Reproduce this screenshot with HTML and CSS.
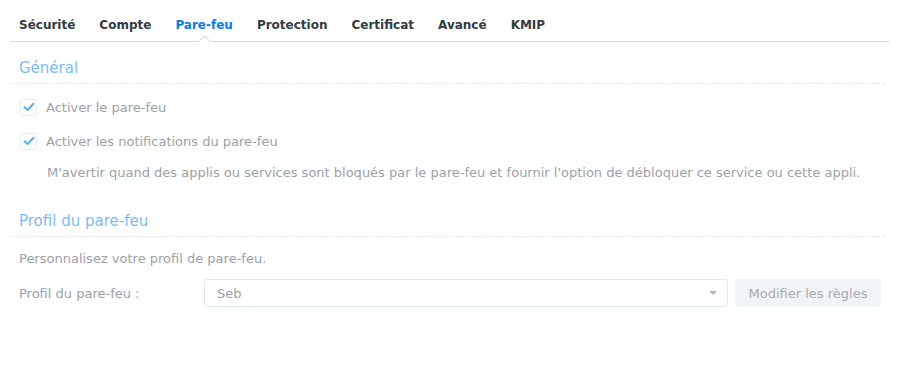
FILE: index.html
```html
<!DOCTYPE html>
<html lang="fr">
  <head>
    <meta charset="UTF-8" />
    <title>Pare-feu</title>
    <link rel="stylesheet" href="styles.css">
  </head>
  <body>
    <!-- tabs -->
    <div class="tabs">
      <span class="tab">Sécurité</span>
      <span class="tab">Compte</span>
      <span class="tab active">Pare-feu</span>
      <span class="tab">Protection</span>
      <span class="tab">Certificat</span>
      <span class="tab">Avancé</span>
      <span class="tab">KMIP</span>
    </div>

    <div class="content">
      <!-- general -->
      <div class="section">
        <h2 class="section-title">Général</h2>
        <label class="check-row">
          <span class="check"><svg width="12" height="10" viewBox="0 0 12 10"><path d="M1.5 5.2 L4.6 8 L10.5 1.8" fill="none" stroke="#5aaaf0" stroke-width="2" stroke-linecap="round" stroke-linejoin="round"/></svg></span>
          Activer le pare-feu
        </label>
        <label class="check-row">
          <span class="check"><svg width="12" height="10" viewBox="0 0 12 10"><path d="M1.5 5.2 L4.6 8 L10.5 1.8" fill="none" stroke="#5aaaf0" stroke-width="2" stroke-linecap="round" stroke-linejoin="round"/></svg></span>
          Activer les notifications du pare-feu
        </label>
        <p class="hint">M'avertir quand des applis ou services sont bloqués par le pare-feu et fournir l'option de débloquer ce service ou cette appli.</p>
      </div>

      <!-- profile -->
      <div class="section">
        <h2 class="section-title">Profil du pare-feu</h2>
        <p class="desc">Personnalisez votre profil de pare-feu.</p>
        <div class="form-row">
          <span class="form-label">Profil du pare-feu :</span>
          <div class="select">
            <span>Seb</span>
            <span class="arrow"></span>
          </div>
          <button class="btn">Modifier les règles</button>
        </div>
      </div>
    </div>
  </body>
</html>
```

FILE: styles.css
```css
* {
  margin: 0;
  padding: 0;
  box-sizing: border-box;
}
body {
  width: 902px;
  height: 365px;
  background: #fff;
  font-family: "DejaVu Sans", Verdana, sans-serif;
  font-size: 13px;
  color: #9ca1a7;
}
.tabs {
  margin: 0 13px 0 10px;
  height: 42px;
  border-bottom: 1px solid #c9dbe6;
  display: flex;
  align-items: flex-end;
  padding-left: 9px;
}
.tab {
  font-weight: bold;
  font-size: 12px;
  color: #323a42;
  padding-bottom: 9px;
  margin-right: 24px;
  position: relative;
}
.tab.active {
  color: #0a7ce2;
}
.tab.active::after {
  content: "";
  position: absolute;
  left: 50%;
  bottom: -5px;
  width: 8px;
  height: 8px;
  margin-left: -4px;
  background: #fff;
  border-left: 1px solid #c9dbe6;
  border-top: 1px solid #c9dbe6;
  transform: rotate(45deg);
}
.content {
  padding: 0 14px 0 10px;
}
.section {
  padding-left: 9px;
}
.section-title {
  font-size: 15px;
  font-weight: normal;
  color: #7cbcf2;
  margin-left: -9px;
  padding-left: 9px;
  padding-top: 17px;
  padding-bottom: 6px;
  border-bottom: 1px dashed #e6e9ec;
  margin-right: 3px;
  line-height: 18px;
}
.check-row {
  display: flex;
  align-items: center;
  gap: 9px;
  height: 18px;
  margin-top: 14px;
  padding-left: 1px;
}
.check-row + .check-row {
  margin-top: 16px;
}
.check {
  width: 17px;
  height: 17px;
  border: 1px solid #e8ecef;
  border-radius: 3px;
  display: flex;
  align-items: center;
  justify-content: center;
}
.hint {
  margin-top: 15px;
  padding-left: 28px;
  line-height: 16px;
}
.section + .section {
  margin-top: 14px;
}
.desc {
  margin-top: 14px;
  line-height: 16px;
}
.form-row {
  display: flex;
  align-items: center;
  margin-top: 12px;
}
.form-label {
  width: 185px;
}
.select {
  width: 524px;
  height: 28px;
  border: 1px solid #e3e8ec;
  border-radius: 3px;
  display: flex;
  align-items: center;
  justify-content: space-between;
  padding: 0 10px 0 12px;
}
.arrow {
  width: 0;
  height: 0;
  border-left: 4px solid transparent;
  border-right: 4px solid transparent;
  border-top: 4px solid #b3b8bd;
}
.btn {
  margin-left: 7px;
  width: 146px;
  height: 28px;
  border: 0;
  border-radius: 3px;
  background: #f1f4f7;
  color: #a6abb0;
  font-family: "DejaVu Sans", Verdana, sans-serif;
  font-size: 13px;
}
```
